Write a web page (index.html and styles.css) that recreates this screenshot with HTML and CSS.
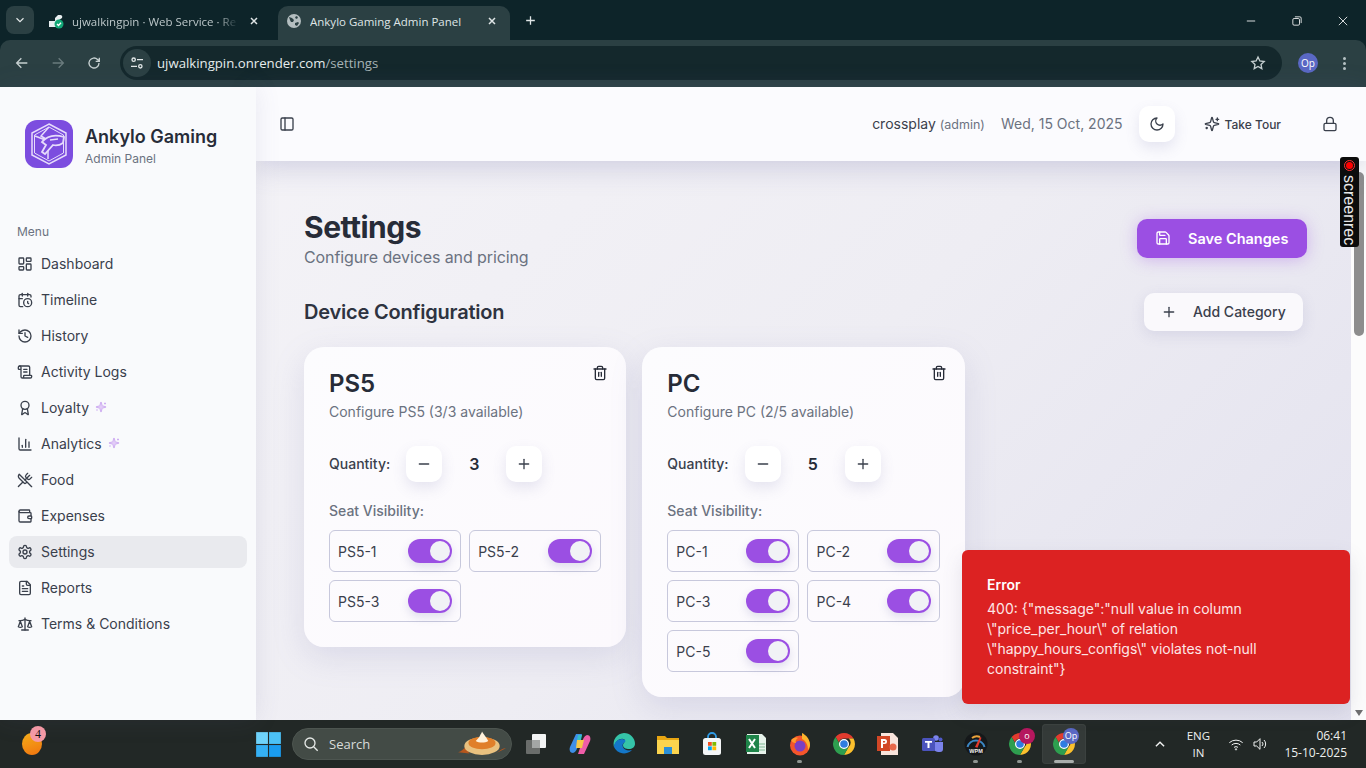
FILE: index.html
```html
<!DOCTYPE html>
<html>
  <head>
    <meta charset="utf-8" />
    <title>Ankylo Gaming Admin Panel</title>
    <link rel="stylesheet" href="styles.css">
  </head>
  <body>
    <svg class="sprites" width="0" height="0">
      <symbol id="i-panel" viewBox="0 0 24 24"><rect x="3" y="3" width="18" height="18" rx="2"/><path d="M9 3v18"/></symbol>
      <symbol id="i-dashboard" viewBox="0 0 24 24"><rect x="3" y="3" width="7" height="9" rx="1"/><rect x="14" y="3" width="7" height="5" rx="1"/><rect x="14" y="12" width="7" height="9" rx="1"/><rect x="3" y="16" width="7" height="5" rx="1"/></symbol>
      <symbol id="i-timeline" viewBox="0 0 24 24"><path d="M21 7.5V6a2 2 0 0 0-2-2H5a2 2 0 0 0-2 2v14a2 2 0 0 0 2 2h3.5"/><path d="M16 2v4"/><path d="M8 2v4"/><path d="M3 10h5"/><path d="M17.5 17.5 16 16.3V14"/><circle cx="16" cy="16" r="6"/></symbol>
      <symbol id="i-history" viewBox="0 0 24 24"><path d="M3 12a9 9 0 1 0 9-9 9.75 9.75 0 0 0-6.74 2.74L3 8"/><path d="M3 3v5h5"/><path d="M12 7v5l4 2"/></symbol>
      <symbol id="i-logs" viewBox="0 0 24 24"><path d="M15 12h-5"/><path d="M15 8h-5"/><path d="M19 17V5a2 2 0 0 0-2-2H4"/><path d="M8 21h12a2 2 0 0 0 2-2v-1a1 1 0 0 0-1-1H11a1 1 0 0 0-1 1v1a2 2 0 1 1-4 0V5a2 2 0 1 0-4 0v2a1 1 0 0 0 1 1h3"/></symbol>
      <symbol id="i-award" viewBox="0 0 24 24"><path d="m15.477 12.89 1.515 8.526a.5.5 0 0 1-.81.47l-3.58-2.687a1 1 0 0 0-1.197 0l-3.586 2.686a.5.5 0 0 1-.81-.469l1.514-8.526"/><circle cx="12" cy="8" r="6"/></symbol>
      <symbol id="i-chart" viewBox="0 0 24 24"><path d="M3 3v16a2 2 0 0 0 2 2h16"/><path d="M18 17V9"/><path d="M13 17V5"/><path d="M8 17v-3"/></symbol>
      <symbol id="i-food" viewBox="0 0 24 24"><path d="m16 2-2.3 2.3a3 3 0 0 0 0 4.2l1.8 1.8a3 3 0 0 0 4.2 0L22 8"/><path d="M15 15 3.3 3.3a4.2 4.2 0 0 0 0 6l7.3 7.3c.7.7 2 .7 2.8 0L15 15Zm0 0 7 7"/><path d="m2.1 21.8 6.4-6.3"/><path d="m19 5-7 7"/></symbol>
      <symbol id="i-wallet" viewBox="0 0 24 24"><path d="M19 7V4a1 1 0 0 0-1-1H5a2 2 0 0 0 0 4h15a1 1 0 0 1 1 1v4h-3a2 2 0 0 0 0 4h3a1 1 0 0 0 1-1v-2a1 1 0 0 0-1-1"/><path d="M3 5v14a2 2 0 0 0 2 2h15a1 1 0 0 0 1-1v-4"/></symbol>
      <symbol id="i-gear" viewBox="0 0 24 24"><path d="M12.22 2h-.44a2 2 0 0 0-2 2v.18a2 2 0 0 1-1 1.73l-.43.25a2 2 0 0 1-2 0l-.15-.08a2 2 0 0 0-2.73.73l-.22.38a2 2 0 0 0 .73 2.73l.15.1a2 2 0 0 1 1 1.72v.51a2 2 0 0 1-1 1.74l-.15.09a2 2 0 0 0-.73 2.73l.22.38a2 2 0 0 0 2.73.73l.15-.08a2 2 0 0 1 2 0l.43.25a2 2 0 0 1 1 1.73V20a2 2 0 0 0 2 2h.44a2 2 0 0 0 2-2v-.18a2 2 0 0 1 1-1.73l.43-.25a2 2 0 0 1 2 0l.15.08a2 2 0 0 0 2.73-.73l.22-.39a2 2 0 0 0-.73-2.73l-.15-.08a2 2 0 0 1-1-1.74v-.5a2 2 0 0 1 1-1.74l.15-.09a2 2 0 0 0 .73-2.73l-.22-.38a2 2 0 0 0-2.73-.73l-.15.08a2 2 0 0 1-2 0l-.43-.25a2 2 0 0 1-1-1.73V4a2 2 0 0 0-2-2z"/><circle cx="12" cy="12" r="3"/></symbol>
      <symbol id="i-file" viewBox="0 0 24 24"><path d="M15 2H6a2 2 0 0 0-2 2v16a2 2 0 0 0 2 2h12a2 2 0 0 0 2-2V7Z"/><path d="M14 2v4a2 2 0 0 0 2 2h4"/><path d="M10 9H8"/><path d="M16 13H8"/><path d="M16 17H8"/></symbol>
      <symbol id="i-scale" viewBox="0 0 24 24"><path d="m16 16 3-8 3 8c-.87.65-1.92 1-3 1s-2.13-.35-3-1Z"/><path d="m2 16 3-8 3 8c-.87.65-1.92 1-3 1s-2.13-.35-3-1Z"/><path d="M7 21h10"/><path d="M12 3v18"/><path d="M3 7h2c2 0 5-1 7-2 2 1 5 2 7 2h2"/></symbol>
      <symbol id="i-sparkles" viewBox="0 0 24 24"><path d="M9.937 15.5A2 2 0 0 0 8.5 14.063l-6.135-1.582a.5.5 0 0 1 0-.962L8.5 9.936A2 2 0 0 0 9.937 8.5l1.582-6.135a.5.5 0 0 1 .963 0L14.063 8.5A2 2 0 0 0 15.5 9.937l6.135 1.581a.5.5 0 0 1 0 .964L15.5 14.063a2 2 0 0 0-1.437 1.437l-1.582 6.135a.5.5 0 0 1-.963 0z"/><path d="M20 3v4"/><path d="M22 5h-4"/><path d="M4 17v2"/><path d="M5 18H3"/></symbol>
      <symbol id="i-trash" viewBox="0 0 24 24"><path d="M3 6h18"/><path d="M19 6v14c0 1-1 2-2 2H7c-1 0-2-1-2-2V6"/><path d="M8 6V4c0-1 1-2 2-2h4c1 0 2 1 2 2v2"/><path d="M10 11v6"/><path d="M14 11v6"/></symbol>
      <symbol id="i-minus" viewBox="0 0 24 24"><path d="M5 12h14"/></symbol>
      <symbol id="i-plus" viewBox="0 0 24 24"><path d="M5 12h14"/><path d="M12 5v14"/></symbol>
      <symbol id="i-chrome" viewBox="0 0 24 24">
        <path d="M12 1a11 11 0 0 1 9.5 5.5H12a5.5 5.5 0 0 0-5.2 3.7L3.6 5A11 11 0 0 1 12 1Z" fill="#e23b2e" stroke="none"/>
        <path d="M21.5 6.5A11 11 0 0 1 12 23l4.7-8.2a5.5 5.5 0 0 0 .1-8.3Z" fill="#fbc02d" stroke="none"/>
        <path d="M3.6 5l4.8 8.2a5.5 5.5 0 0 0 8.3 1.6L12 23A11 11 0 0 1 3.6 5Z" fill="#2e9e4f" stroke="none"/>
        <circle cx="12" cy="12" r="4.4" fill="#2f7de1" stroke="#fff" stroke-width="1.2"/>
      </symbol>
    </svg>

    <!-- browser chrome -->
    <div class="browser">
      <div class="tabstrip">
        <button class="tab-menu">
          <svg class="ico-s" viewBox="0 0 24 24"><path d="m6 9 6 6 6-6"/></svg>
        </button>
        <div class="tab">
          <svg class="favicon" viewBox="0 0 16 16"><path d="M1 8h6V5l3-3h2a2 2 0 0 1 2 3l-3 2v7H1Z" fill="#e8eef0"/><circle cx="11" cy="11" r="4.5" fill="#12a877"/><path d="m9 11 1.5 1.5L13 9.800" stroke="#fff" stroke-width="1.300" fill="none"/></svg>
          <span class="tab-title tab-fade">ujwalkingpin · Web Service · Re</span>
          <svg class="tab-close" viewBox="0 0 24 24"><path d="M6 6l12 12M18 6 6 18"/></svg>
        </div>
        <div class="tab tab-active">
          <svg class="favicon" viewBox="0 0 16 16"><circle cx="8" cy="8" r="7" fill="#b4bec0"/><path d="M3 4l3 1 2 2-1 2-2 0-1-2ZM10 3l2 1-1 2-2-1ZM9 10l3-1 1 1-2 3-2-1Z" fill="#2b4043"/></svg>
          <span class="tab-title">Ankylo Gaming Admin Panel</span>
          <svg class="tab-close" viewBox="0 0 24 24"><path d="M6 6l12 12M18 6 6 18"/></svg>
        </div>
        <svg class="new-tab" viewBox="0 0 24 24"><path d="M12 4v16M4 12h16"/></svg>
        <div class="window-controls">
          <svg viewBox="0 0 12 12"><path d="M1 6h10"/></svg>
          <svg viewBox="0 0 12 12"><rect x="1" y="3" width="8" height="8" rx="1.500"/><path d="M3.500 1h6a1.500 1.500 0 0 1 1.500 1.500v6"/></svg>
          <svg viewBox="0 0 12 12"><path d="M1 1l10 10M11 1 1 11"/></svg>
        </div>
      </div>
      <div class="toolbar">
        <svg class="tool-ico" viewBox="0 0 24 24"><path d="M20 12H5M11 5l-7 7 7 7"/></svg>
        <svg class="tool-ico tool-off" viewBox="0 0 24 24"><path d="M4 12h15M13 5l7 7-7 7"/></svg>
        <svg class="tool-ico" viewBox="0 0 24 24"><path d="M19.500 12a7.500 7.500 0 1 1-2.200-5.300L20 9.500M20 4v5.500h-5.500"/></svg>
        <div class="omnibox">
          <span class="site-btn">
            <svg class="ico-s" viewBox="0 0 24 24"><circle cx="7" cy="7" r="2.500"/><path d="M12 7h9M3 17h9"/><circle cx="17" cy="17" r="2.500"/></svg>
          </span>
          <span class="url">ujwalkingpin.onrender.com<span class="url-path">/settings</span></span>
          <svg class="star" viewBox="0 0 24 24"><path d="m12 3 2.800 5.900 6.400.8-4.700 4.400 1.200 6.400L12 17.300l-5.700 3.200 1.200-6.400L2.800 9.700l6.400-.8Z"/></svg>
        </div>
        <span class="avatar">Op</span>
        <span class="kebab"><i></i><i></i><i></i></span>
      </div>
    </div>

    <!-- page -->
    <div class="viewport">
      <aside class="sidebar">
        <div class="brand">
          <span class="brand-logo">
            <svg viewBox="0 0 48 48" fill="none" stroke="#e6dcfb" stroke-width="1.500">
              <path d="M24 4 41 13v22L24 44 7 35V13Z"/>
              <path d="M24 7 38.500 15v18L24 41 9.500 33V15Z" stroke-width="1"/>
              <path d="M10 16l13 5v18M24 7l-8 9 8 5"/>
              <path d="M17 22c5-6 12-8 22-5l-1 6c-3 2-6 3-10 2l-8 9-3-2 4-7Z" fill="#7c4ddf" stroke-width="1.800"/>
              <path d="M25 20l8-1"/>
            </svg>
          </span>
          <div class="brand-text">
            <div class="brand-name">Ankylo Gaming</div>
            <div class="brand-sub">Admin Panel</div>
          </div>
        </div>
        <div class="menu-label">Menu</div>
        <nav class="nav">
          <a class="nav-item"><svg class="ico"><use href="#i-dashboard"/></svg>Dashboard</a>
          <a class="nav-item"><svg class="ico"><use href="#i-timeline"/></svg>Timeline</a>
          <a class="nav-item"><svg class="ico"><use href="#i-history"/></svg>History</a>
          <a class="nav-item"><svg class="ico"><use href="#i-logs"/></svg>Activity Logs</a>
          <a class="nav-item"><svg class="ico"><use href="#i-award"/></svg>Loyalty<svg class="ico-new"><use href="#i-sparkles"/></svg></a>
          <a class="nav-item"><svg class="ico"><use href="#i-chart"/></svg>Analytics<svg class="ico-new"><use href="#i-sparkles"/></svg></a>
          <a class="nav-item"><svg class="ico"><use href="#i-food"/></svg>Food</a>
          <a class="nav-item"><svg class="ico"><use href="#i-wallet"/></svg>Expenses</a>
          <a class="nav-item nav-active"><svg class="ico"><use href="#i-gear"/></svg>Settings</a>
          <a class="nav-item"><svg class="ico"><use href="#i-file"/></svg>Reports</a>
          <a class="nav-item"><svg class="ico"><use href="#i-scale"/></svg>Terms &amp; Conditions</a>
        </nav>
      </aside>

      <div class="content">
        <header class="topbar">
          <svg class="ico"><use href="#i-panel"/></svg>
          <div class="topbar-right">
            <span class="user">crossplay <small>(admin)</small></span>
            <span class="today">Wed, 15 Oct, 2025</span>
            <button class="icon-btn theme-btn">
              <svg class="ico" viewBox="0 0 24 24"><path d="M12 3a6 6 0 0 0 9 9 9 9 0 1 1-9-9Z"/></svg>
            </button>
            <span class="tour"><svg class="ico"><use href="#i-sparkles"/></svg>Take Tour</span>
            <svg class="ico lock" viewBox="0 0 24 24"><rect x="3" y="11" width="18" height="11" rx="2"/><path d="M7 11V7a5 5 0 0 1 10 0v4"/></svg>
          </div>
        </header>

        <main class="main">
          <div class="page-head">
            <div>
              <h1>Settings</h1>
              <p class="page-sub">Configure devices and pricing</p>
            </div>
            <button class="save-btn">
              <svg class="ico" viewBox="0 0 24 24"><path d="M15.200 3a2 2 0 0 1 1.400.6l3.800 3.800a2 2 0 0 1 .6 1.400V19a2 2 0 0 1-2 2H5a2 2 0 0 1-2-2V5a2 2 0 0 1 2-2z"/><path d="M17 21v-7a1 1 0 0 0-1-1H8a1 1 0 0 0-1 1v7"/><path d="M7 3v4a1 1 0 0 0 1 1h7"/></svg>
              Save Changes
            </button>
          </div>

          <div class="section-head">
            <h2>Device Configuration</h2>
            <button class="add-btn"><svg class="ico"><use href="#i-plus"/></svg>Add Category</button>
          </div>

          <div class="cards">
            <section class="card">
              <div class="card-head">
                <h3>PS5</h3>
                <svg class="ico"><use href="#i-trash"/></svg>
              </div>
              <p class="card-sub">Configure PS5 (3/3 available)</p>
              <div class="qty">
                <span class="qty-label">Quantity:</span>
                <button class="icon-btn"><svg class="ico"><use href="#i-minus"/></svg></button>
                <span class="qty-num">3</span>
                <button class="icon-btn"><svg class="ico"><use href="#i-plus"/></svg></button>
              </div>
              <div class="seat-label">Seat Visibility:</div>
              <div class="seats">
                <div class="seat">PS5-1<span class="switch"></span></div>
                <div class="seat">PS5-2<span class="switch"></span></div>
                <div class="seat">PS5-3<span class="switch"></span></div>
              </div>
            </section>

            <section class="card">
              <div class="card-head">
                <h3>PC</h3>
                <svg class="ico"><use href="#i-trash"/></svg>
              </div>
              <p class="card-sub">Configure PC (2/5 available)</p>
              <div class="qty">
                <span class="qty-label">Quantity:</span>
                <button class="icon-btn"><svg class="ico"><use href="#i-minus"/></svg></button>
                <span class="qty-num">5</span>
                <button class="icon-btn"><svg class="ico"><use href="#i-plus"/></svg></button>
              </div>
              <div class="seat-label">Seat Visibility:</div>
              <div class="seats">
                <div class="seat">PC-1<span class="switch"></span></div>
                <div class="seat">PC-2<span class="switch"></span></div>
                <div class="seat">PC-3<span class="switch"></span></div>
                <div class="seat">PC-4<span class="switch"></span></div>
                <div class="seat">PC-5<span class="switch"></span></div>
              </div>
            </section>
          </div>
        </main>

        <div class="scrollbar">
          <span class="scroll-thumb"></span>
          <span class="scroll-down"></span>
        </div>
      </div>

      <!-- overlays -->
      <div class="toast">
        <div class="toast-title">Error</div>
        <div class="toast-body">400: {"message":"null value in column \"price_per_hour\" of relation \"happy_hours_configs\" violates not-null constraint"}</div>
      </div>
      <div class="screenrec"><span class="rec-dot"></span><span class="rec-text">screenrec</span></div>
    </div>

    <!-- windows taskbar -->
    <div class="taskbar">
      <div class="widgets">
        <span class="widget-blob"></span>
        <span class="widget-badge">4</span>
      </div>
      <div class="task-app">
        <svg class="app app-win" viewBox="0 0 24 24"><path d="M1 1h10.500v10.500H1Z" fill="#6fd3fb"/><path d="M12.500 1H23v10.500H12.500Z" fill="#4cc2f7"/><path d="M1 12.500h10.500V23H1Z" fill="#35b0f5"/><path d="M12.500 12.500H23V23H12.500Z" fill="#1a9cf0"/></svg>
      </div>
      <div class="search">
        <svg class="search-ico" viewBox="0 0 24 24"><circle cx="10.500" cy="10.500" r="7.500"/><path d="m16 16 6 6"/></svg>
        <span>Search</span>
        <svg class="pie" viewBox="0 0 48 26"><path d="M1 21c3-1 5-3 7-5l4 6ZM47 17c-3 0-6 2-8 4l-4 2Z" fill="#b5561d"/><ellipse cx="24" cy="15" rx="17" ry="8.500" fill="#e9c17f"/><ellipse cx="24" cy="12" rx="13" ry="6" fill="#e07f2a"/><path d="M18 10c2-2 3-3 4-5 1-2 2-3 2-4 1 2 4 5 6 9-3 2-9 2-12 0Z" fill="#fff2dc"/></svg>
      </div>
      <div class="task-app">
        <svg class="app" viewBox="0 0 24 24"><rect x="2" y="8" width="14" height="14" rx="1" fill="#6a6d6b"/><rect x="8" y="2" width="14" height="14" rx="1" fill="#f3f4f4"/><rect x="8" y="8" width="8" height="8" fill="#a4a7a6"/></svg>
      </div>
      <div class="task-app">
        <svg class="app" viewBox="0 0 24 24"><path d="M8 2h6l-4 12c-1 3-2 6-5 7-3 0-4-3-3-6Z" fill="#3d8fe8"/><path d="M16 22h-6l4-12c1-3 2-6 5-7 3 0 4 3 3 6Z" fill="#ef5da8"/><path d="M9 8h7l-2 8H8Z" fill="#f7c948"/><path d="M10 3h4l-1 5H9Z" fill="#35c0c7"/></svg>
      </div>
      <div class="task-app">
        <svg class="app" viewBox="0 0 24 24"><path d="M12 1a11 11 0 0 1 11 11c0 3-3 5-6 5-3 0-6-1-6-4 0-2 2-3 2-4C13 6 8 6 5 9c-2 2-3 5-3 6A11 11 0 0 1 12 1Z" fill="#35c4a8"/><path d="M2 15c0-5 4-8 8-8 3 0 4 2 3 3-2 1-3 3-2 5 1 3 5 4 9 3a11 11 0 0 1-18-3Z" fill="#1477c9"/></svg>
      </div>
      <div class="task-app">
        <svg class="app" viewBox="0 0 24 24"><path d="M1 4h8l2 2h12v15H1Z" fill="#e8a612"/><path d="M1 8h22v14H1Z" fill="#fbd44e"/><rect x="8" y="15" width="8" height="7" fill="#2a8fd8"/></svg>
      </div>
      <div class="task-app">
        <svg class="app" viewBox="0 0 24 24"><path d="M8 7V5a4 4 0 0 1 8 0v2" fill="none" stroke="#2f9be6" stroke-width="1.800"/><rect x="3" y="6" width="18" height="17" rx="2.500" fill="#f4f6f7"/><rect x="8" y="10" width="3.800" height="3.800" fill="#f25022"/><rect x="12.400" y="10" width="3.800" height="3.800" fill="#7fba00"/><rect x="8" y="14.400" width="3.800" height="3.800" fill="#00a4ef"/><rect x="12.400" y="14.400" width="3.800" height="3.800" fill="#ffb900"/></svg>
      </div>
      <div class="task-app">
        <svg class="app" viewBox="0 0 24 24"><path d="M3 2h15l4 4v16H3Z" fill="#e6f2ea"/><path d="M2 3h13v17H2Z" fill="#1e8449"/><path d="m5 7 6 9M11 7l-6 9" stroke="#fff" stroke-width="2" fill="none"/><path d="M15 12h6M15 15h6M15 18h6" stroke="#7fb893" fill="none"/></svg>
      </div>
      <div class="task-app task-open">
        <svg class="app" viewBox="0 0 24 24"><circle cx="12" cy="13.500" r="10" fill="#f4552b"/><path d="M14 1c4 2 8 6 8 12 0 2-1 3-2 5 0-5-2-9-6-11Z" fill="#fcb42c"/><circle cx="12" cy="14" r="5.500" fill="#7a3fc4"/><path d="M3 8c2-2 5-3 7-2-2 1-3 3-2 5-3 0-4-1-5-3Z" fill="#ff9a2e"/></svg>
      </div>
      <div class="task-app">
        <svg class="app"><use href="#i-chrome"/></svg>
      </div>
      <div class="task-app">
        <svg class="app" viewBox="0 0 24 24"><path d="M5 1h12l5 5v17H5Z" fill="#f8e4dc"/><path d="M1 4h13v15H1Z" fill="#d24726"/><path d="M5 7h3.500a2.500 2.500 0 0 1 0 5H7v4H5Zm2 2v1.500h1.500a.7.7 0 0 0 0-1.500Z" fill="#fff"/><circle cx="17" cy="15" r="3.500" fill="#e8684a"/></svg>
      </div>
      <div class="task-app">
        <svg class="app" viewBox="0 0 24 24"><circle cx="16" cy="6" r="2.800" fill="#7b83eb"/><circle cx="20.500" cy="7.500" r="2" fill="#5059c9"/><path d="M13 10h10v7a3 3 0 0 1-3 3h-2a5 5 0 0 1-5-5Z" fill="#7b83eb"/><rect x="2" y="6" width="13" height="13" rx="1.500" fill="#4b53bc"/><path d="M5 9h7v1.800H9.500V16h-2v-5.200H5Z" fill="#fff"/></svg>
      </div>
      <div class="task-app task-open">
        <svg class="app" viewBox="0 0 24 24"><circle cx="12" cy="12" r="11.500" fill="#15181a"/><path d="M3.500 15a8.800 8.800 0 0 1 17 0" fill="none" stroke="#3b87c4" stroke-width="2"/><path d="M11 15l5-10 1.500.8-4 10Z" fill="#e2382c"/><path d="M8 6a8 8 0 0 1 8-1" fill="none" stroke="#e9a23b" stroke-width="2"/><text x="12" y="21" class="wpm-text">WPM</text></svg>
      </div>
      <div class="task-app task-open">
        <svg class="app"><use href="#i-chrome"/></svg>
        <span class="profile-badge badge-red">o</span>
      </div>
      <div class="task-app task-open task-current">
        <svg class="app"><use href="#i-chrome"/></svg>
        <span class="profile-badge badge-blue">Op</span>
      </div>

      <div class="tray">
        <svg class="tray-chevron" viewBox="0 0 24 24"><path d="m5 16 7-7 7 7"/></svg>
        <div class="tray-lang">ENG<br>IN</div>
        <svg class="tray-ico" viewBox="0 0 24 24"><path d="M2 10a15 15 0 0 1 20 0M5.500 13.500a10 10 0 0 1 13 0M9 17a5 5 0 0 1 6 0"/><circle cx="12" cy="20" r="1"/></svg>
        <svg class="tray-ico" viewBox="0 0 24 24"><path d="M3 9v6h4l5 5V4L7 9Z"/><path d="M15 9a4 4 0 0 1 0 6M18 6a8.500 8.500 0 0 1 0 12"/></svg>
        <div class="tray-clock">06:41<br>15-10-2025</div>
      </div>
    </div>
  </body>
</html>
```

FILE: styles.css
```css
/* Page reset */
* {
  box-sizing: border-box;
}

html,
body {
  margin: 0;
  height: 100%;
}

body {
  width: 1366px;
  height: 768px;
  display: flex;
  flex-direction: column;
  overflow: hidden;
  font-family: "Inter", "Liberation Sans", sans-serif;
  color: #262b36;
}

button {
  font-family: inherit;
  border: none;
  padding: 0;
  cursor: pointer;
}

h1,
h2,
h3,
p {
  margin: 0;
}

.sprites {
  position: absolute;
}

/* Lucide style line icons */
.ico {
  width: 16px;
  height: 16px;
  flex: none;
  fill: none;
  stroke: currentColor;
  stroke-width: 2;
  stroke-linecap: round;
  stroke-linejoin: round;
}

.ico-s {
  width: 16px;
  height: 16px;
  fill: none;
  stroke: #e3e8e9;
  stroke-width: 2;
}

/* Browser chrome */
.browser {
  flex: none;
  height: 87px;
  background: #0d2429;
  font-family: "Open Sans", "Liberation Sans", sans-serif;
  color: #dfe5e6;
}

.tabstrip {
  height: 40px;
  display: flex;
  align-items: flex-end;
  padding-left: 6px;
  position: relative;
}

.tab-menu {
  width: 28px;
  height: 28px;
  margin-bottom: 6px;
  margin-right: 6px;
  border-radius: 8px;
  background: #2b4043;
  display: flex;
  align-items: center;
  justify-content: center;
}

.tab-menu .ico-s {
  width: 14px;
  height: 14px;
}

.tab {
  width: 232px;
  height: 34px;
  margin-right: 6px;
  padding: 0 8px 4px 8px;
  display: flex;
  align-items: center;
  font-size: 11.500px;
  border-radius: 10px 10px 0 0;
}

.tab-active {
  background: #2b4043;
}

.favicon {
  width: 16px;
  height: 16px;
  flex: none;
  margin-right: 8px;
}

.tab-title {
  flex: 1;
  white-space: nowrap;
  overflow: hidden;
}

.tab-fade {
  color: #bcc7c9;
  -webkit-mask-image: linear-gradient(to right, #000 88%, transparent);
  mask-image: linear-gradient(to right, #000 88%, transparent);
}

.tab-close {
  width: 12px;
  height: 12px;
  flex: none;
  margin: 0 4px 0 10px;
  fill: none;
  stroke: #dfe5e6;
  stroke-width: 3;
}

.new-tab {
  width: 13px;
  height: 13px;
  margin: 0 0 13px 8px;
  fill: none;
  stroke: #dfe5e6;
  stroke-width: 2.400;
}

.window-controls {
  margin-left: auto;
  margin-right: 18px;
  margin-bottom: 14px;
  display: flex;
  gap: 36px;
}

.window-controls svg {
  width: 10px;
  height: 10px;
  overflow: visible;
  fill: none;
  stroke: #fff;
  stroke-width: 1;
}

.toolbar {
  height: 47px;
  background: #2b4043;
  border-radius: 10px 10px 0 0;
  padding: 0 14px 0 14px;
  display: flex;
  align-items: center;
  border-bottom: 1px solid #2b4043;
}

.tool-ico {
  width: 16px;
  height: 16px;
  margin-right: 20px;
  flex: none;
  fill: none;
  stroke: #c5cfd0;
  stroke-width: 2;
}

.tool-off {
  stroke: #6a7b7e;
}

.omnibox {
  margin-left: -2px;
  width: 1162px;
  height: 34px;
  flex: none;
  border-radius: 17px;
  background: #14282c;
  display: flex;
  align-items: center;
  padding: 0 16px 0 3px;
}

.site-btn {
  width: 28px;
  height: 28px;
  border-radius: 50%;
  background: #2b4043;
  display: flex;
  align-items: center;
  justify-content: center;
}

.url {
  margin-left: 6px;
  font-size: 13.200px;
  color: #e6ecec;
}

.url-path {
  color: #a6b3b5;
}

.star {
  margin-left: auto;
  width: 16px;
  height: 16px;
  fill: none;
  stroke: #c5cfd0;
  stroke-width: 2;
}

.avatar {
  margin-left: 16px;
  width: 20px;
  height: 20px;
  flex: none;
  border-radius: 50%;
  background: #5a68c4;
  color: #fff;
  font-size: 10px;
  display: flex;
  align-items: center;
  justify-content: center;
}

.kebab {
  margin-left: 25px;
  display: flex;
  flex-direction: column;
  gap: 2px;
}

.kebab i {
  display: block;
  width: 3px;
  height: 3px;
  border-radius: 50%;
  background: #b6c2c4;
}

/* App area */
.viewport {
  flex: 1;
  min-height: 0;
  display: flex;
  position: relative;
}

.sidebar {
  width: 256px;
  flex: none;
  background: #f9fafc;
  padding: 33px 9px 0;
  box-shadow: 0 0 24px rgba(90, 90, 140, 0.12);
  position: relative;
  z-index: 1;
}

.brand {
  display: flex;
  align-items: center;
  gap: 12px;
  padding-left: 16px;
}

.brand-logo {
  width: 48px;
  height: 48px;
  border-radius: 12px;
  background: #7c4ddf;
  display: block;
}

.brand-logo svg {
  display: block;
}

.brand-text {
  padding-top: 4px;
}

.brand-name {
  font-size: 18px;
  line-height: 26px;
  font-weight: 600;
  color: #272c38;
}

.brand-sub {
  font-size: 12px;
  line-height: 18px;
  color: #6b7280;
}

.menu-label {
  margin: 56px 0 8px 8px;
  font-size: 12px;
  line-height: 16px;
  color: #6b7280;
}

.nav {
  display: flex;
  flex-direction: column;
  gap: 4px;
}

.nav-item {
  height: 32px;
  padding: 0 0 2px 8px;
  display: flex;
  align-items: center;
  gap: 8px;
  border-radius: 8px;
  font-size: 14px;
  color: #3a404c;
}

.nav-item .ico {
  margin-top: 2px;
}

.nav-active {
  background: #e9eaee;
}

.ico-new {
  width: 12px;
  height: 12px;
  margin-left: -2px;
  fill: #e2ccf7;
  stroke: #cfaef2;
  stroke-width: 2;
}

.content {
  flex: 1;
  min-width: 0;
  display: grid;
  grid-template-columns: 1fr 15px;
  grid-template-rows: 74px 1fr;
  background: linear-gradient(135deg, #f4f3f7 0%, #eeedf3 50%, #e2e1ee 100%);
}

.topbar {
  grid-column: 1 / 3;
  background: #fbfbfe;
  display: flex;
  align-items: center;
  padding: 0 28px 0 23px;
  color: #3a404c;
  box-shadow: 0 6px 28px rgba(100, 100, 160, 0.25);
  position: relative;
}

.topbar-right {
  margin-left: auto;
  display: flex;
  align-items: center;
}

.user {
  margin-bottom: 2px;
  font-size: 14px;
  color: #3a404c;
}

.user small {
  font-size: 12.500px;
  color: #6b7280;
}

.today {
  margin: 0 0 2px 16px;
  font-size: 14px;
  color: #6b7280;
}

.icon-btn {
  width: 36px;
  height: 36px;
  flex: none;
  border-radius: 10px;
  background: #fff;
  color: #3a404c;
  display: flex;
  align-items: center;
  justify-content: center;
  box-shadow: 0 6px 14px rgba(110, 110, 170, 0.16);
}

.theme-btn {
  margin-left: 16px;
}

.tour {
  margin-left: 29px;
  display: flex;
  align-items: center;
  gap: 5px;
  font-size: 12px;
  font-weight: 500;
}

.lock {
  margin-left: 41px;
}

/* Main column */
.main {
  padding: 48px 48px 0;
  min-width: 0;
  overflow: hidden;
}

.page-head {
  display: flex;
  justify-content: space-between;
  align-items: center;
}

h1 {
  font-size: 30px;
  line-height: 36px;
  font-weight: 700;
  letter-spacing: -0.5px;
  color: #272c38;
}

.page-sub {
  font-size: 16px;
  line-height: 24px;
  letter-spacing: -0.1px;
  color: #6b7280;
}

.save-btn {
  width: 170px;
  height: 39px;
  margin: -2px -4px 0 0;
  padding-left: 18px;
  display: flex;
  align-items: center;
  gap: 17px;
  border-radius: 10px;
  background: #9b4fe3;
  color: #fff;
  font-size: 14.500px;
  font-weight: 600;
  box-shadow: 0 2px 16px rgba(155, 79, 227, 0.35);
}

.section-head {
  margin-top: 24px;
  display: flex;
  justify-content: space-between;
  align-items: center;
}

h2 {
  font-size: 20px;
  line-height: 28px;
  font-weight: 600;
  letter-spacing: -0.2px;
  color: #2e3340;
}

.add-btn {
  width: 159px;
  height: 38px;
  padding: 0 0 2px 17px;
  display: flex;
  align-items: center;
  gap: 16px;
  border-radius: 10px;
  background: #faf9fc;
  color: #3a404c;
  font-size: 14px;
  font-weight: 500;
  box-shadow: 0 4px 14px rgba(110, 110, 170, 0.16);
}

.add-btn .ico {
  margin-top: 2px;
}

.cards {
  margin-top: 16px;
  display: grid;
  grid-template-columns: repeat(3, 1fr);
  gap: 16px;
  align-items: start;
}

.card {
  padding: 21px 25px 25px;
  border-radius: 20px;
  background: linear-gradient(135deg, #fcfcfe, #fcf9fd);
  box-shadow: 0 10px 32px rgba(120, 120, 180, 0.18);
}

.card-head {
  display: flex;
  justify-content: space-between;
  align-items: flex-start;
  color: #272c38;
}

.card-head .ico {
  margin: -3px -7px 0 0;
}

h3 {
  font-size: 24px;
  line-height: 32px;
  font-weight: 600;
  color: #272c38;
}

.card-sub {
  margin-top: 2px;
  font-size: 14px;
  line-height: 20px;
  color: #6b7280;
}

.qty {
  margin-top: 24px;
  display: flex;
  align-items: center;
}

.qty-label {
  width: 77.400px;
  margin-bottom: 2px;
  font-size: 14px;
  font-weight: 500;
  color: #3a404c;
}

.qty-num {
  width: 64px;
  text-align: center;
  font-size: 16px;
  font-weight: 600;
}

.seat-label {
  margin-top: 19px;
  font-size: 14px;
  line-height: 20px;
  font-weight: 500;
  color: #6b7280;
}

.seats {
  margin-top: 9px;
  display: grid;
  grid-template-columns: 1fr 1fr;
  gap: 8px;
}

.seat {
  height: 42px;
  padding: 0 8px;
  display: flex;
  align-items: center;
  justify-content: space-between;
  border: 1px solid #c7c8dc;
  border-radius: 6px;
  font-size: 14px;
  color: #3a404c;
}

.switch {
  width: 44px;
  height: 24px;
  flex: none;
  padding: 2px;
  display: flex;
  justify-content: flex-end;
  border-radius: 12px;
  background: #9b4fe3;
  box-shadow: 0 4px 10px rgba(110, 110, 170, 0.2);
}

.switch::after {
  content: "";
  width: 20px;
  height: 20px;
  border-radius: 50%;
  background: #f1f2f6;
}

/* Page scrollbar */
.scrollbar {
  background: #fcfcfc;
  display: flex;
  flex-direction: column;
  align-items: center;
  padding: 11px 0 4px;
}

.scroll-thumb {
  width: 10px;
  height: 164px;
  border-radius: 5px;
  background: #8d8d8d;
}

.scroll-down {
  margin-top: auto;
  width: 0;
  height: 0;
  border-left: 4.500px solid transparent;
  border-right: 4.500px solid transparent;
  border-top: 6px solid #6f6f6f;
}

/* Error toast */
.toast {
  position: absolute;
  right: 16px;
  bottom: 16px;
  width: 388px;
  height: 154px;
  padding: 25px 49px 0 25px;
  z-index: 3;
  border-radius: 6px;
  background: #dc2222;
  color: #fff;
  box-shadow: 0 8px 20px rgba(90, 90, 120, 0.15);
}

.toast-title {
  font-size: 14px;
  line-height: 20px;
  font-weight: 600;
}

.toast-body {
  margin-top: 4px;
  font-size: 14px;
  line-height: 20px;
  color: #fde6e6;
}

/* Screen recorder overlay */
.screenrec {
  position: absolute;
  top: 70px;
  left: 1340px;
  width: 19px;
  height: 90px;
  z-index: 4;
  border-radius: 3px;
  background: #0c0c0c;
  display: flex;
  flex-direction: column;
  align-items: center;
  padding-top: 3px;
}

.rec-dot {
  width: 11px;
  height: 11px;
  flex: none;
  border-radius: 50%;
  background: #f00;
  border: 2px solid #0c0c0c;
  outline: 1px solid #f33;
  outline-offset: -1px;
}

.rec-text {
  margin-top: 4px;
  writing-mode: vertical-rl;
  font-family: "Liberation Sans", sans-serif;
  font-size: 16px;
  line-height: 19px;
  color: #e9e9e9;
}

/* Taskbar */
.taskbar {
  flex: none;
  height: 48px;
  background: #222826;
  display: flex;
  align-items: center;
  font-family: "Open Sans", "Liberation Sans", sans-serif;
  color: #eef0ef;
}

.widgets {
  width: 246px;
  height: 48px;
  flex: none;
  position: relative;
}

.widget-blob {
  position: absolute;
  left: 22px;
  top: 13px;
  width: 20px;
  height: 22px;
  border-radius: 50%;
  background: linear-gradient(160deg, #f5b01a, #f0720f);
}

.widget-badge {
  position: absolute;
  left: 30px;
  top: 6px;
  width: 16px;
  height: 16px;
  border-radius: 50%;
  background: #f79aa6;
  color: #111;
  font-family: "Liberation Serif", serif;
  font-size: 12px;
  line-height: 16px;
  text-align: center;
}

.task-app {
  width: 44px;
  height: 40px;
  flex: none;
  display: flex;
  align-items: center;
  justify-content: center;
  position: relative;
  border-radius: 4px;
}

.app {
  width: 24px;
  height: 24px;
  fill: none;
  stroke: none;
}

.app-win {
  width: 27px;
  height: 27px;
}

.wpm-text {
  font-family: "Liberation Sans", sans-serif;
  font-size: 5.500px;
  font-weight: 700;
  fill: #f2f2f2;
  text-anchor: middle;
}

.task-open::after {
  content: "";
  position: absolute;
  left: 19px;
  bottom: 1px;
  width: 5px;
  height: 3px;
  border-radius: 2px;
  background: #8f9592;
}

.task-current {
  background: #343a38;
  box-shadow: inset 0 0 0 1px #3b413f;
}

.task-current::after {
  left: 12px;
  width: 20px;
  background: #a9aeac;
}

.profile-badge {
  position: absolute;
  left: 21px;
  top: 4px;
  width: 16px;
  height: 16px;
  border-radius: 50%;
  color: #fff;
  font-size: 9px;
  line-height: 15px;
  text-align: center;
}

.badge-red {
  background: #b5175e;
}

.badge-blue {
  background: #5a68c4;
}

.search {
  width: 220px;
  height: 32px;
  flex: none;
  margin: 0 2px 0 2px;
  padding: 0 10px;
  display: flex;
  align-items: center;
  gap: 10px;
  border-radius: 16px;
  background: #434b46;
  border: 1px solid #4d5550;
  font-size: 13px;
  color: #d9dcda;
  position: relative;
}

.search-ico {
  width: 16px;
  height: 16px;
  fill: none;
  stroke: #e6e9e7;
  stroke-width: 2;
}

.pie {
  position: absolute;
  right: 4px;
  top: 1px;
  width: 50px;
  height: 28px;
}

.tray {
  margin-left: auto;
  padding-right: 19px;
  display: flex;
  align-items: center;
  font-size: 12px;
}

.tray-chevron {
  width: 14px;
  height: 14px;
  margin-right: 17px;
  fill: none;
  stroke: #f0f2f1;
  stroke-width: 2.400;
}

.tray-lang {
  width: 28px;
  font-size: 11.500px;
  line-height: 17px;
  text-align: center;
  margin-right: 16px;
}

.tray-ico {
  width: 16px;
  height: 16px;
  margin-right: 8px;
  fill: none;
  stroke: #f0f2f1;
  stroke-width: 1.500;
}

.tray-clock {
  margin-left: 8px;
  line-height: 17px;
  text-align: right;
}
```
